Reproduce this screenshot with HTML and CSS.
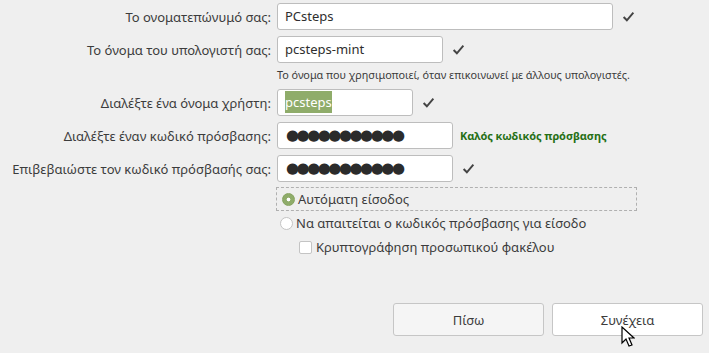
FILE: index.html
```html
<!DOCTYPE html>
<html>

<head>
	<meta charset="utf-8">
	<title>Ρύθμιση χρήστη</title>
	<link rel="stylesheet" href="styles.css">
</head>

<body>
	<div class="page">
		<div class="form">
			<label class="label">Το ονοματεπώνυμό σας:</label>
			<div class="field">
				<div class="entry w-full">PCsteps</div>
				<svg class="check" viewBox="0 0 12 10"><polyline points="1.5,5.5 4.5,8.5 10.5,1.5" /></svg>
			</div>

			<label class="label">Το όνομα του υπολογιστή σας:</label>
			<div class="field">
				<div class="entry w-host">pcsteps-mint</div>
				<svg class="check" viewBox="0 0 12 10"><polyline points="1.5,5.5 4.5,8.5 10.5,1.5" /></svg>
			</div>

			<div></div>
			<p class="hint">Το όνομα που χρησιμοποιεί, όταν επικοινωνεί με άλλους υπολογιστές.</p>

			<label class="label">Διαλέξτε ένα όνομα χρήστη:</label>
			<div class="field">
				<div class="entry w-user"><span class="selected">pcsteps</span></div>
				<svg class="check" viewBox="0 0 12 10"><polyline points="1.5,5.5 4.5,8.5 10.5,1.5" /></svg>
			</div>

			<label class="label">Διαλέξτε έναν κωδικό πρόσβασης:</label>
			<div class="field">
				<div class="entry w-pass dots">●●●●●●●●●●●</div>
				<span class="strength">Καλός κωδικός πρόσβασης</span>
			</div>

			<label class="label">Επιβεβαιώστε τον κωδικό πρόσβασής σας:</label>
			<div class="field">
				<div class="entry w-pass dots">●●●●●●●●●●●</div>
				<svg class="check" viewBox="0 0 12 10"><polyline points="1.5,5.5 4.5,8.5 10.5,1.5" /></svg>
			</div>

			<div></div>
			<div class="options">
				<div class="option focused">
					<span class="radio on"></span>
					<span>Αυτόματη είσοδος</span>
				</div>
				<div class="option">
					<span class="radio"></span>
					<span>Να απαιτείται ο κωδικός πρόσβασης για είσοδο</span>
				</div>
				<div class="option sub">
					<span class="box"></span>
					<span>Κρυπτογράφηση προσωπικού φακέλου</span>
				</div>
			</div>
		</div>

		<div class="buttons">
			<button class="btn back">Πίσω</button>
			<button class="btn next">Συνέχεια
				<svg class="cursor" viewBox="0 0 14 22"><path d="M1,1 L1,17 L5,13 L8,20 L11,19 L8,12 L13,12 Z" /></svg>
			</button>
		</div>
	</div>
</body>

</html>
```

FILE: styles.css
```css
body {
	margin: 0;
	background-color: #efefef;
	font-family: 'Noto Sans', 'Open Sans', sans-serif;
	font-size: 13px;
	color: #3c3c3c;
}

.page {
	width: 709px;
	height: 353px;
	display: flex;
	flex-direction: column;
}

.form {
	display: grid;
	grid-template-columns: 271px 1fr;
	column-gap: 6px;
	row-gap: 6px;
	padding-top: 3px;
	align-items: center;
}

.label {
	text-align: right;
}

.field {
	display: flex;
	align-items: center;
	height: 27px;
}

.entry {
	box-sizing: border-box;
	height: 27px;
	line-height: 25px;
	padding: 0 7px;
	background-color: white;
	border: 1px solid #bdbdbd;
	border-radius: 3px;
	color: #2e2e2e;
	overflow: hidden;
	white-space: nowrap;
}

.w-full {
	width: 336px;
}

.w-host {
	width: 166px;
}

.w-user {
	width: 136px;
}

.w-pass {
	width: 176px;
}

.selected {
	background-color: #8fac6a;
	color: white;
	padding: 2px 0;
}

.dots {
	font-family: 'DejaVu Sans', sans-serif;
	font-size: 15px;
	letter-spacing: -2.5px;
	padding-left: 8px;
	color: #2b2b2b;
}

.check {
	width: 13px;
	height: 11px;
	margin-left: 9px;
	fill: none;
	stroke: #444;
	stroke-width: 1.8;
}

.strength {
	margin-left: 7px;
	font-size: 11px;
	font-weight: bold;
	color: #267016;
	letter-spacing: -0.1px;
}

.hint {
	margin: -3px 0 -1px;
	font-size: 10.8px;
	line-height: 18px;
}

.options {
	display: flex;
	flex-direction: column;
	margin-left: -1px;
	margin-top: -1px;
	width: 361px;
}

.option {
	display: flex;
	align-items: center;
	height: 24px;
	padding-left: 4px;
	gap: 3px;
}

.focused {
	box-sizing: border-box;
	border: 1px dashed #b0b0b0;
	padding-left: 5px;
}

.sub {
	padding-left: 23px;
	gap: 4px;
}

.radio {
	box-sizing: border-box;
	width: 13px;
	height: 13px;
	border-radius: 50%;
	border: 1px solid #c4c4c4;
	background-color: white;
}

.radio.on {
	border-color: #86a35f;
	background: radial-gradient(circle, white 1.6px, #8fac6a 2.2px);
}

.box {
	box-sizing: border-box;
	width: 13px;
	height: 13px;
	border: 1px solid #c4c4c4;
	border-radius: 2px;
	background-color: white;
}

.buttons {
	margin-top: auto;
	display: flex;
	justify-content: flex-end;
	gap: 8px;
	padding: 0 6px 17px 0;
}

.btn {
	position: relative;
	width: 151px;
	height: 33px;
	font-family: 'Noto Sans', 'Open Sans', sans-serif;
	font-size: 13px;
	color: #3c3c3c;
	border: 1px solid #c6c6c6;
	border-radius: 3px;
	background-color: #f5f5f5;
}

.next {
	background-color: white;
}

.cursor {
	position: absolute;
	left: 68px;
	top: 22px;
	width: 14px;
	height: 22px;
	fill: white;
	stroke: black;
	stroke-width: 1.2;
}
```
